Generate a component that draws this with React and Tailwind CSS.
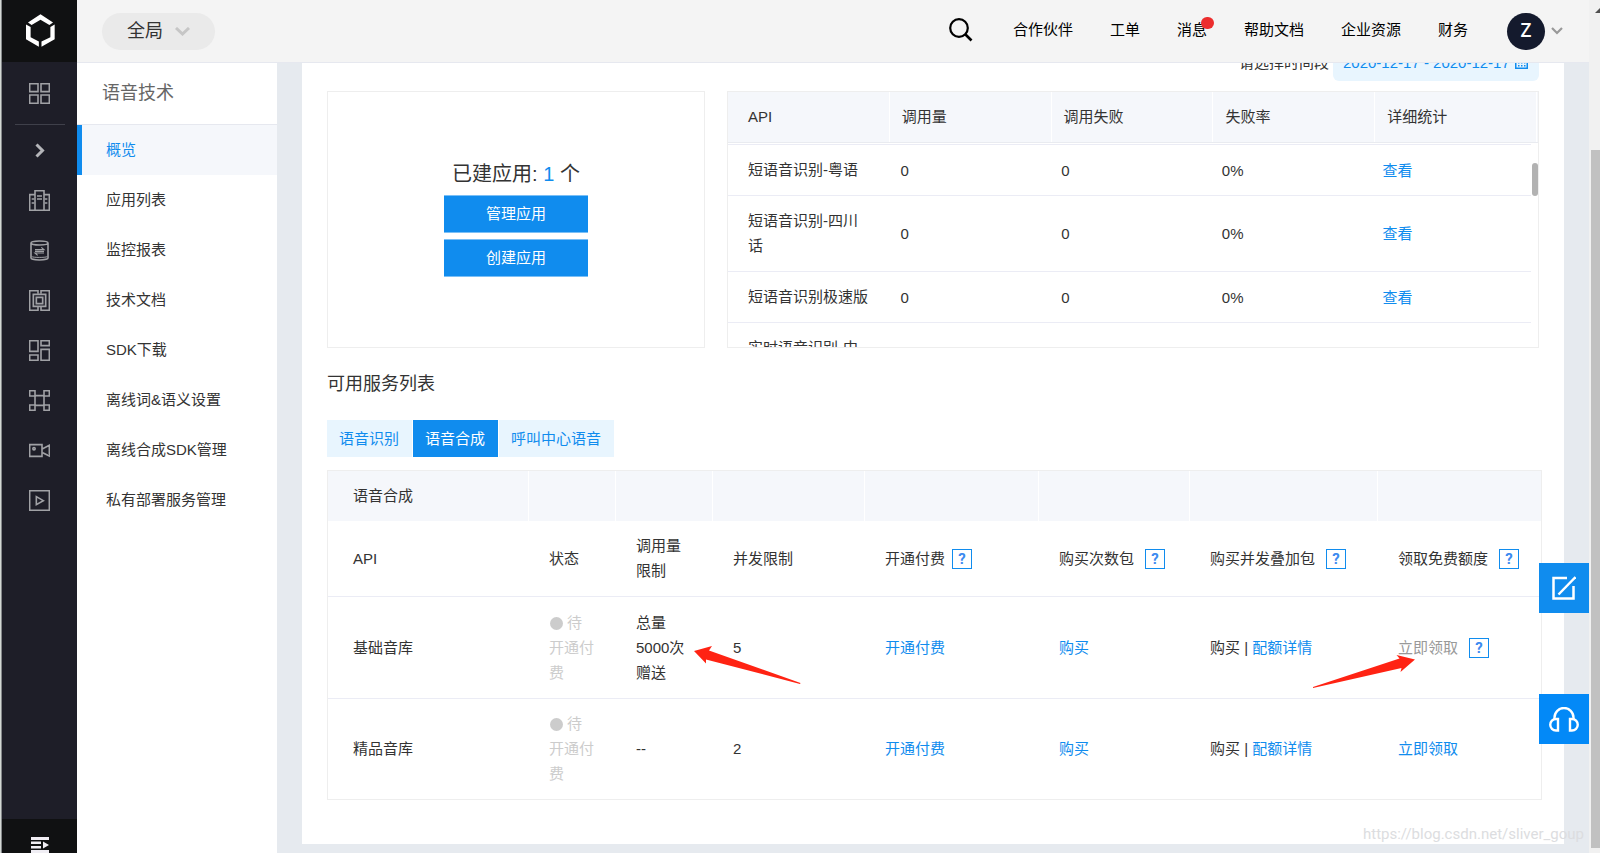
import { useState } from 'react'
import clsx from 'clsx'

const BLUE_LINK = 'text-[#108cee] hover:underline'

const TOP_LINKS = [
  { label: '合作伙伴' },
  { label: '工单' },
  { label: '消息', dot: true },
  { label: '帮助文档' },
  { label: '企业资源' },
  { label: '财务' },
]

const MENU = [
  '概览',
  '应用列表',
  '监控报表',
  '技术文档',
  'SDK下载',
  '离线词&语义设置',
  '离线合成SDK管理',
  '私有部署服务管理',
]

const USAGE = [
  { api: '短语音识别-粤语', calls: 0, failed: 0, rate: '0%' },
  { api: '短语音识别-四川话', calls: 0, failed: 0, rate: '0%' },
  { api: '短语音识别极速版', calls: 0, failed: 0, rate: '0%' },
  { api: '实时语音识别-中文普通话', calls: 0, failed: 0, rate: '0%' },
]

const TABS = ['语音识别', '语音合成', '呼叫中心语音']

const SERVICES = [
  { name: '基础音库', quota: '总量5000次赠送', qps: 5, claimed: true },
  { name: '精品音库', quota: '--', qps: 2, claimed: false },
]

export default function App() {
  return (
    <div className="flex h-screen overflow-hidden bg-[#e6eaef] font-['Liberation_Sans','Noto_Sans_CJK_SC',sans-serif] text-[15px] leading-[25px] text-[#333]">
      <div className="w-[2px] shrink-0 border-r border-[#85888a] bg-[#d3d8d4]" />
      <IconRail />
      <div className="flex min-w-0 flex-1 flex-col">
        <Header />
        <div className="flex min-h-0 flex-1">
          <SideMenu />
          <Overview />
        </div>
      </div>
      <PageScrollbar />
      <FloatingTools />
      <div className="pointer-events-none absolute right-[11px] bottom-1.5 w-[226px] font-['Roboto',sans-serif] whitespace-nowrap text-[#dcdde0]">
        https://blog.csdn.net/sliver_goup
      </div>
    </div>
  )
}

function Header() {
  return (
    <header className="flex h-[63px] shrink-0 items-center border-b border-[#e6e8ef] bg-[#f4f4f4] pr-[26px] pl-[25px]">
      <button className="flex h-[37px] w-[113px] items-center gap-3 rounded-full bg-[#eaeaea] pl-[25px] text-[18px]">
        全局
        <svg className="h-[9px] w-[15px]" viewBox="0 0 15 9" fill="none" stroke="#c6c6c6" strokeWidth="3">
          <path d="M1 1l6.500 6L14 1" />
        </svg>
      </button>
      <button aria-label="搜索" className="ml-auto pb-0.5 text-black">
        <svg className="h-6 w-6" viewBox="0 0 24 24" fill="none" stroke="currentColor" strokeWidth="2.200">
          <circle cx="10" cy="10" r="8.800" />
          <path d="M16 16l6.500 6.500" strokeWidth="2.600" />
        </svg>
      </button>
      <nav className="ml-10 flex gap-[37px] pb-1 text-black">
        {TOP_LINKS.map((link) => (
          <a key={link.label} href="#" className="relative">
            {link.label}
            {link.dot && <span className="absolute top-0 -right-[7px] h-3 w-[13px] rounded-full bg-[#ec2d2d]" />}
          </a>
        ))}
      </nav>
      <button className="ml-[39px] flex items-center gap-[6px]">
        <span className="flex h-[37px] w-[38px] items-center justify-center rounded-full bg-[#141a2d] pb-0.5 font-['Open_Sans',sans-serif] text-[19px] font-semibold text-white">
          Z
        </span>
        <svg className="h-2 w-3" viewBox="0 0 12 8" fill="none" stroke="#999" strokeWidth="2.200">
          <path d="M1 1l5 5 5-5" />
        </svg>
      </button>
    </header>
  )
}

function RailIcon({ label, children }) {
  return (
    <button aria-label={label} className="flex h-[50px] w-full items-center justify-center">
      <svg className="h-[21px] w-[21px]" viewBox="0 0 63 63" fill="none" stroke="#a0a1a5" strokeWidth="4.800">
        {children}
      </svg>
    </button>
  )
}

function IconRail() {
  return (
    <aside className="flex w-[75px] shrink-0 flex-col bg-[#1e1e28]">
      <div className="flex h-[62px] items-center justify-center bg-[#101112] pb-0.5 pl-0.5">
        <svg className="h-[33px] w-[29px]" viewBox="78 42 88 99" fill="#fff">
          <path d="M84 67l38-25 38 25-11 8-27-16-27 16z" />
          <path d="M78 73l14 8v31l25 13v16l-39-23z" />
          <path d="M165 73l-13 8v31l-27 13v16l40-23z" />
        </svg>
      </div>
      <div className="flex h-[62px] items-center">
        <RailIcon label="总览">
          <path d="M2 2h25v24H2zM36 2h25v24H36zM2 36h25v25H2zM36 36h25v25H36z" />
        </RailIcon>
      </div>
      <div className="mx-auto h-px w-[50px] shrink-0 bg-[#3f404a]" />
      <button aria-label="展开" className="flex h-[50px] w-full items-center justify-center">
        <svg className="h-[15px] w-[10px]" viewBox="0 0 10 15" fill="none" stroke="#b4b5b9" strokeWidth="3">
          <path d="M1.500 1.500l6 6-6 6" />
        </svg>
      </button>
      <RailIcon label="产业">
        <path d="M18 61V2h27v59M18 14H2v47h59V14H45" />
        <path d="M24 18h15M24 27h15M8 27h8M8 39h8M47 27h8M47 39h8" strokeWidth="4" />
      </RailIcon>
      <RailIcon label="数据">
        <path d="M6 9c0-4 10-6 25-6s26 2 26 6-11 6-26 6S6 13 6 9zM6 9v45c0 3 10 6 25 6s26-3 26-6V9" />
        <path d="M8 50c6 3 40 3 47 0" strokeWidth="3" />
        <path d="M18 29h27l-8-7M45 39H18l8 7M18 34h27" strokeWidth="3.500" />
      </RailIcon>
      <RailIcon label="芯片">
        <path d="M27 11V2H2v59h25V51M36 11V2h25v59H36V51" />
        <path d="M13 13h37v36H13zM22 22h19v19H22z" strokeWidth="5" />
      </RailIcon>
      <RailIcon label="布局">
        <path d="M2 2h25v32H2zM36 2h25v15H36zM2 45h25v16H2zM36 28h25v33H36z" />
      </RailIcon>
      <RailIcon label="网络">
        <path d="M2 2h16v16H2zM45 2h16v16H45zM2 45h16v16H2zM45 45h16v16H45z" />
        <path d="M18 18v27M45 18v27M18 17h27M18 46h27" />
      </RailIcon>
      <RailIcon label="视频">
        <path d="M2 14h37v35H2zM41 26l20-10v32L41 38" />
        <circle cx="15" cy="26" r="3.500" />
      </RailIcon>
      <RailIcon label="播放">
        <path d="M2 2h59v59H2zM22 20v24l21-12z" />
      </RailIcon>
      <button aria-label="收起" className="mt-auto flex h-[34px] w-full justify-center bg-[#101112] pt-[18px]">
        <svg className="h-4 w-[18px]" viewBox="0 0 18 16" fill="#f0eef4">
          <path d="M0 0h18v3H0zM0 4.500h10v2.500H0zM0 9h10v2.500H0zM0 13h18v3H0zM12 4.500l6 3.500-6 3.500z" />
        </svg>
      </button>
    </aside>
  )
}

function SideMenu() {
  const [active, setActive] = useState('概览')

  return (
    <nav className="w-[200px] shrink-0 bg-white">
      <h2 className="flex h-[62px] items-center border-b border-[#e6e8ef] pl-[25px] text-[18px] text-[#666]">语音技术</h2>
      {MENU.map((item) => (
        <a
          key={item}
          href="#"
          onClick={() => setActive(item)}
          className={clsx(
            'flex h-[50px] items-center border-l-[5px] pb-0.5 pl-6',
            item === active ? 'border-[#108cee] bg-[#f5f7fb] text-[#108cee]' : 'border-transparent',
          )}
        >
          {item}
        </a>
      ))}
    </nav>
  )
}

function Overview() {
  return (
    <main className="min-w-0 flex-1 overflow-hidden px-[25px]">
      <section className="flow-root bg-white px-[25px] pb-[44px]">
        <div className="-mt-[19px] flex h-[37px] items-center justify-end gap-1">
          <label htmlFor="range">请选择时间段</label>
          <div className="flex h-full items-center gap-1 rounded-[6px] bg-[#e8f5fe] pr-[11px] pl-[10px] text-[#108cee]">
            <input id="range" readOnly defaultValue="2020-12-17 - 2020-12-17" className="w-[168px] outline-none" />
            <svg className="h-[13px] w-[13px]" viewBox="0 0 13 13" fill="currentColor">
              <path fillRule="evenodd" d="M0 1h3V0h1v1h5V0h1v1h3v12H0zM1.500 5v6.500h10V5z" />
              <path d="M3 6h1.500v1.500H3zM6 6h1.500v1.500H6zM9 6h1.500v1.500H9zM3 9h1.500v1.500H3zM6 9h1.500v1.500H6zM9 9h1.500v1.500H9z" />
            </svg>
          </div>
        </div>

        <div className="mt-[10px] grid h-[257px] grid-cols-[378fr_812fr] gap-[22px]">
          <AppsPanel />
          <UsageTable />
        </div>

        <h3 className="mt-6 text-[18px]">可用服务列表</h3>
        <ServiceTabs />
        <ServiceTable />
      </section>
    </main>
  )
}

function AppsPanel() {
  const button = 'h-[38px] w-[144px] border-y border-[#7abff6] bg-[#108cee] pb-0.5 text-white'

  return (
    <div className="flex flex-col items-center justify-center border border-[#eee]">
      <p className="mb-[9px] text-[20px] leading-6">
        已建应用: <span className="text-[#108cee]">1</span> 个
      </p>
      <button className={clsx(button, 'mb-[6px]')}>管理应用</button>
      <button className={button}>创建应用</button>
    </div>
  )
}

function UsageTable() {
  return (
    <div className="relative overflow-hidden border border-[#eee]">
      <table className="block">
        <thead className="block border-b border-[#e9ebf0] bg-[#f5f7fb]">
          <tr className="grid h-[50px] grid-cols-5 pr-px text-left">
            {['API', '调用量', '调用失败', '失败率', '详细统计'].map((title) => (
              <th key={title} className="flex items-center border-r border-white pb-0.5 pl-3 font-normal first:pl-5">
                {title}
              </th>
            ))}
          </tr>
        </thead>
        <tbody className="block pt-px pr-[7px]">
          {USAGE.map((row) => (
            <tr key={row.api} className="grid grid-cols-5 items-center border-b border-[#ebecf5] first:border-t">
              <td className="pt-3 pr-5 pb-[13px] pl-5">{row.api}</td>
              <td className="pl-3">{row.calls}</td>
              <td className="pl-3">{row.failed}</td>
              <td className="pl-3">{row.rate}</td>
              <td className="pl-3">
                <a href="#" className={BLUE_LINK}>查看</a>
              </td>
            </tr>
          ))}
        </tbody>
      </table>
      <div className="absolute top-[71px] right-0 h-[33px] w-[6px] rounded-full bg-[#b2b2b2]" />
    </div>
  )
}

function ServiceTabs() {
  const [tab, setTab] = useState('语音合成')

  return (
    <div className="mt-[23px] flex">
      {TABS.map((name) => (
        <button
          key={name}
          onClick={() => setTab(name)}
          className={clsx(
            'h-[37px] border-r border-white pr-[13px] pl-3 last:border-r-0',
            name === tab ? 'bg-[#108cee] text-white' : 'bg-[#e8f5fe] text-[#108cee]',
          )}
        >
          {name}
        </button>
      ))}
    </div>
  )
}

function Help({ className }) {
  return (
    <button
      aria-label="说明"
      className={clsx(
        "inline-flex h-5 w-5 items-center justify-center border border-[#108cee] align-baseline font-['Roboto',sans-serif] text-[15px] leading-5 font-bold text-[#3c8af0]",
        className,
      )}
    >
      ?
    </button>
  )
}

function ServiceTable() {
  return (
    <div className="relative mt-[13px] -mr-[3px] border border-[#eee]">
      <table className="w-full table-fixed border-separate border-spacing-0 text-left">
        <colgroup>
          <col className="w-[201px]" />
          <col className="w-[87px]" />
          <col className="w-[97px]" />
          <col className="w-[152px]" />
          <col className="w-[174px]" />
          <col className="w-[151px]" />
          <col className="w-[188px]" />
          <col className="w-[163px]" />
        </colgroup>
        <thead>
          <tr className="h-[50px] bg-[#f5f7fb] [&>th]:border-r [&>th]:border-white [&>th]:pb-0.5 [&>th]:font-normal">
            <th className="pl-[25px]">语音合成</th>
            <th />
            <th />
            <th />
            <th />
            <th />
            <th />
            <th className="border-r-0!" />
          </tr>
        </thead>
        <tbody className="[&_td]:border-[#ebecf5] [&_td]:pl-5 [&_td:first-child]:pl-[25px]">
          <tr className="[&>td]:border-b [&>td]:pt-3 [&>td]:pb-[13px]">
            <td>API</td>
            <td>状态</td>
            <td className="pr-5">调用量限制</td>
            <td>并发限制</td>
            <td>开通付费<Help className="ml-[7px]" /></td>
            <td>购买次数包<Help className="ml-[11px]" /></td>
            <td>购买并发叠加包<Help className="ml-[11px]" /></td>
            <td>领取免费额度<Help className="ml-[11px]" /></td>
          </tr>
          {SERVICES.map((row) => (
            <tr key={row.name} className="[&>td]:border-b [&>td]:py-[13px] last:[&>td]:border-b-0 last:[&>td]:pt-3">
              <td>{row.name}</td>
              <td className="pr-5 text-[#ccc]">
                <span className="mr-1 ml-px inline-block h-[13px] w-[13px] rounded-full bg-[#ccc] align-[-2px]" />
                待开通付费
              </td>
              <td className="pr-5">{row.quota}</td>
              <td>{row.qps}</td>
              <td><a href="#" className={BLUE_LINK}>开通付费</a></td>
              <td><a href="#" className={BLUE_LINK}>购买</a></td>
              <td>购买 | <a href="#" className={BLUE_LINK}>配额详情</a></td>
              <td>
                {row.claimed ? (
                  <>
                    <span className="text-[#999]">立即领取</span>
                    <Help className="ml-[11px]" />
                  </>
                ) : (
                  <a href="#" className={BLUE_LINK}>立即领取</a>
                )}
              </td>
            </tr>
          ))}
        </tbody>
      </table>

      {/* red annotation arrows */}
      <svg className="pointer-events-none absolute top-[174px] left-[366px] h-[40px] w-[107px]" viewBox="0 0 107 40" fill="#ff2313">
        <path d="M0 6l18-5-3 4.500 91.500 32.500-.500 1L12 14.500v4z" />
      </svg>
      <svg className="pointer-events-none absolute top-[183px] right-[126px] h-[34px] w-[102px]" viewBox="0 0 102 34" fill="#ff2313">
        <path d="M102 5.500L83.500 1l3 3.500L0 33v1l88.500-20-1 4z" />
      </svg>
    </div>
  )
}

function FloatingTools() {
  return (
    <>
      <button aria-label="反馈" className="fixed top-[563px] right-[11px] flex h-[50px] w-[50px] items-center justify-center bg-[#108cee]">
        <svg className="h-6 w-6" viewBox="0 0 24 24" fill="none" stroke="#fff" strokeWidth="2.500">
          <path d="M15 2H1.500v20.500h20V10" />
          <path d="M6.500 18.500L23.500 1" />
        </svg>
      </button>
      <button aria-label="客服" className="fixed top-[694px] right-[11px] flex h-[50px] w-[50px] items-center justify-center bg-[#0389f7]">
        <svg className="h-[25px] w-[30px]" viewBox="0 0 30 25" fill="none" stroke="#fff" strokeWidth="2.400">
          <path d="M5.500 12v-1.500a9.500 9.500 0 0 1 19 0V12" />
          <path d="M9 12H7a5.600 5.600 0 0 0 0 11.500h2zM21 12h2a5.600 5.600 0 0 1 0 11.500h-2z" />
        </svg>
      </button>
    </>
  )
}

function PageScrollbar() {
  return (
    <div className="flex w-[11px] shrink-0 flex-col items-end overflow-hidden bg-[#f1f1f1] pb-[5px]">
      <svg className="mt-2 mb-[137px] h-[5px] w-[5px]" viewBox="0 0 5 5" fill="#505050">
        <path d="M0 5l5-5v5z" />
      </svg>
      <div className="w-[9px] flex-1 bg-[#c1c1c1]" />
    </div>
  )
}
